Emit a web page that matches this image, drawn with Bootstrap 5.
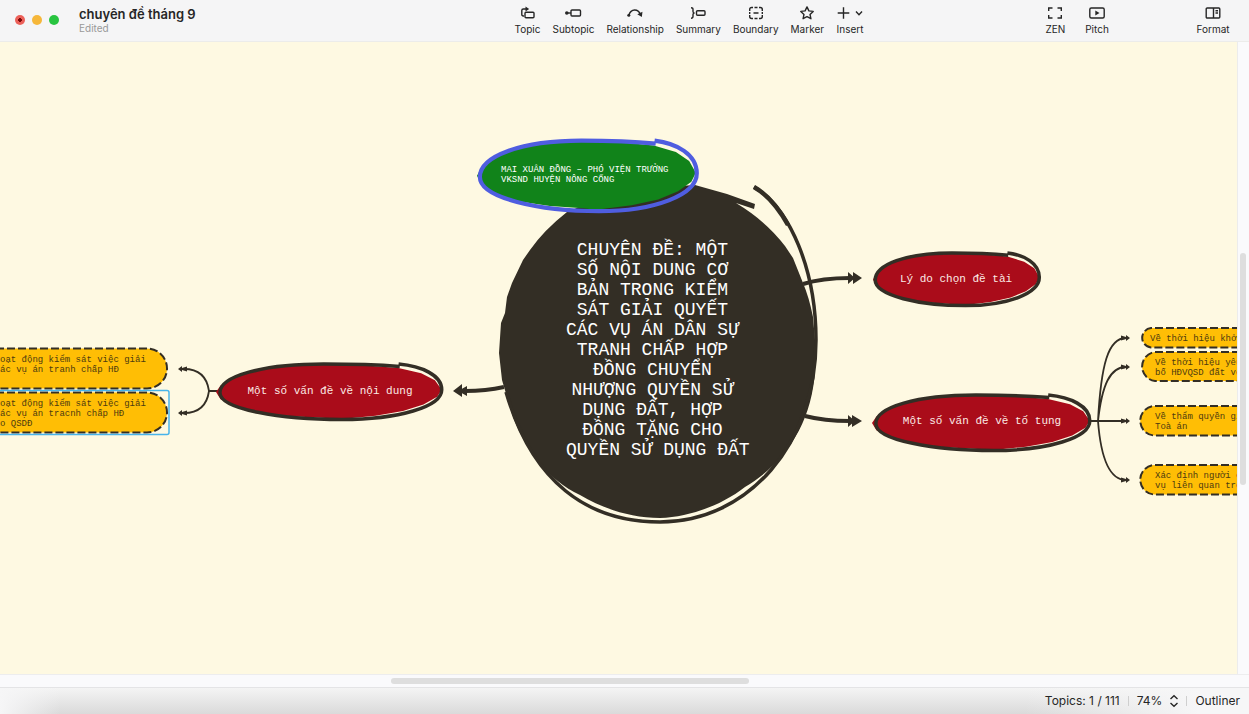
<!DOCTYPE html>
<html lang="vi">
<head>
<meta charset="utf-8">
<meta name="viewport" content="width=device-width, initial-scale=1">
<title>chuyên đề tháng 9</title>
<link rel="stylesheet" href="https://cdn.jsdelivr.net/npm/bootstrap@5.3.0/dist/css/bootstrap.min.css">
<style>
  :root { --ink: #332e25; --paper: #fef9e2; --gold: #ffbe05; --crimson: #aa0c1a; }
  body { font-family: Inter, "Liberation Sans", sans-serif; color: #262626; background: #fafafc; }
  .titlebar { display: grid; grid-template-columns: 41.2% 42.5% 12.1% 1fr; height: 42px; background: #f5f5f6; border-bottom: 1px solid #ececea; }
  .lights { gap: 7px; padding: 15px 0 0 15px; }
  .light { width: 10px; height: 10px; border: 0; border-radius: 50%; padding: 0; display: block; }
  .light-close { background: radial-gradient(circle, #7a0a0a 0 2px, #ec6059 2px); }
  .light-min { background: #f6b73a; }
  .light-zoom { background: #28c440; }
  .doc-title { font-size: 13px; line-height: 16px; font-weight: 600; margin: 6px 0 0; }
  .doc-state { font-size: 10px; line-height: 12px; color: #999; }
  .doc-block { margin-left: 20px; }
  .tool { border: 0; padding: 0; background: none; color: #262626; font-size: 10px; line-height: 12px; display: flex; flex-direction: column; align-items: center; gap: 3px; margin-top: 6px; height: 30px; }
  .tool svg, .stepper svg { fill: none; stroke: currentColor; stroke-width: 1.4; display: block; }
  .tools { gap: 12px; }
  .tools-view { gap: 20px; }
  .canvas { background: var(--paper); }
  .map { left: 0; top: 0; width: 1237px; height: 632px; }
  .ink-fill { fill: var(--ink); }
  .ink-line { fill: none; stroke: var(--ink); }
  .dashed { fill: var(--gold); stroke: var(--ink); stroke-width: 2; stroke-dasharray: 8 3; }
  .topic { position: absolute; margin: 0; white-space: pre; font-family: "Liberation Mono", monospace; }
  .topic-root { left: 566px; top: 198px; font-size: 18px; line-height: 20px; color: #fff; text-align: center; }
  .topic-author { left: 501px; top: 123px; font-size: 9px; line-height: 10px; color: #fff; }
  .topic-main { font-size: 11px; line-height: 14px; color: #fbe9e4; text-align: center; }
  .topic-sub { font-size: 9px; line-height: 10px; color: #4d3b10; }
  .t-content { left: 217px; top: 342px; width: 226px; }
  .t-reason { left: 874px; top: 230px; width: 164px; }
  .t-procedure { left: 874px; top: 372px; width: 216px; }
  .t-l1 { left: 0; top: 313px; }
  .t-l2 { left: 0; top: 357px; }
  .t-r1 { left: 1150px; top: 292px; }
  .t-r2 { left: 1155px; top: 316px; }
  .t-r3 { left: 1155px; top: 370px; }
  .t-r4 { left: 1155px; top: 429px; }
  .gutter-y { width: 12px; border-left: 1px solid #ececec; padding: 211px 0 0 2px; }
  .gutter-y div { width: 6px; height: 232px; border-radius: 3px; background: #dedede; }
  .gutter-x { height: 13px; border-top: 1px solid #ededee; padding-top: 3px; }
  .gutter-x div { height: 6px; width: 28.7%; margin-left: 31.3%; border-radius: 3px; background: #dedede; }
  .statusbar { height: 27px; border-top: 1px solid #e4e4e6; font-size: 12px; line-height: 16px; padding-right: 9px;
    background: linear-gradient(90deg, #f6f6f7 0, #f6f6f700 60px, #f6f6f700 82%, #f6f6f7 96%), linear-gradient(#f4f4f4, #dadada); }
  .divider { width: 1px; height: 10px; background: #cfcfcf; }
  .stepper { border: 0; padding: 0; background: none; color: #262626; }
  .statusbar a { color: #262626; text-decoration: none; }
</style>
</head>
<body class="vh-100 d-flex flex-column overflow-hidden">
<header class="titlebar flex-shrink-0">
  <div class="d-flex align-items-start">
    <div class="lights d-flex">
      <button class="light light-close" aria-label="Close"></button>
      <button class="light light-min" aria-label="Minimize"></button>
      <button class="light light-zoom" aria-label="Zoom"></button>
    </div>
    <div class="doc-block">
      <h1 class="doc-title">chuyên đề tháng 9</h1>
      <div class="doc-state">Edited</div>
    </div>
  </div>
  <nav class="tools d-flex align-items-start">
    <button class="tool"><svg width="18" height="14"><rect x="6" y="6.2" width="9" height="5.6" rx="1"/><path d="M5 10H4.300Q2.800 10 2.800 8.500V4.500Q2.800 3 4.300 3H7.500"/><path d="M6.500 .6 10.200 3 6.500 5.400Z" fill="currentColor" stroke="none"/></svg>Topic</button>
    <button class="tool"><svg width="18" height="14"><rect x="7" y="4" width="9.500" height="6" rx="1"/><path d="M3 7H7"/><circle cx="2.800" cy="7" r="1.800" fill="currentColor" stroke="none"/></svg>Subtopic</button>
    <button class="tool"><svg width="18" height="14"><path d="M3 9C5 2.500 12 2.500 14.500 8.500"/><circle cx="2.800" cy="9.300" r="1.500" fill="currentColor" stroke="none"/><path d="M11.300 8.200 16.500 5.800 15.800 11Z" fill="currentColor" stroke="none"/></svg>Relationship</button>
    <button class="tool"><svg width="18" height="14"><path d="M2 1.800Q4 1.800 4 3.500V5.400Q4 7 5.600 7Q4 7 4 8.600V10.500Q4 12.200 2 12.200"/><rect x="7.500" y="4.700" width="8.500" height="4.600" rx="1"/></svg>Summary</button>
    <button class="tool"><svg width="18" height="14"><path d="M2.700 5V3.500Q2.700 1.500 4.700 1.500H6M12 1.500H13.300Q15.300 1.500 15.300 3.500V5M15.300 9V10.500Q15.300 12.500 13.300 12.500H12M6 12.500H4.700Q2.700 12.500 2.700 10.500V9M7.500 1.500H10.500M7.500 12.500H10.500M2.700 6V8M15.300 6V8M6.500 7H11.500"/></svg>Boundary</button>
    <button class="tool"><svg width="18" height="14"><path stroke-linejoin="round" d="M9 .9 10.900 4.900 15.200 5.400 12 8.400 12.900 12.700 9 10.600 5.100 12.700 6 8.400 2.800 5.400 7.100 4.900Z"/></svg>Marker</button>
    <button class="tool"><svg width="28" height="14"><path d="M7.500 1.200V12.800M1.700 7H13.300M20 5.500 23 8.700 26 5.500"/></svg>Insert</button>
  </nav>
  <nav class="tools-view d-flex align-items-start">
    <button class="tool"><svg width="18" height="14"><path d="M2.700 5V2H6.500M11.500 2H15.300V5M15.300 9V12H11.500M6.500 12H2.700V9"/></svg>ZEN</button>
    <button class="tool"><svg width="18" height="14"><rect x="1.800" y="2" width="14.400" height="10" rx="1.500"/><path d="M7.300 4.500 11.500 7 7.300 9.500Z" fill="currentColor" stroke="none"/></svg>Pitch</button>
  </nav>
  <nav class="d-flex align-items-start">
    <button class="tool"><svg width="18" height="14"><rect x="2.200" y="2" width="13.600" height="10" rx="1"/><path d="M9.500 2V12M11.500 4.700H14M11.500 7H14"/></svg>Format</button>
  </nav>
</header>

<div class="d-flex flex-grow-1 overflow-hidden">
  <main class="canvas position-relative flex-grow-1 overflow-hidden">
    <svg class="map position-absolute" viewBox="0 42 1237 632" aria-hidden="true">
      <defs>
        <!-- hand-drawn ellipse: rough fill and a pen line that overshoots at its end -->
        <symbol id="blob" viewBox="0 0 100 100" preserveAspectRatio="none" overflow="visible">
          <path fill="currentColor" d="M0 51 2 40 7 27 18 14 34 6 48 4 66 6 80 10 90 19 96 31 99 47 97 59 91 72 82 83 70 91 54 97 48 95 33 92 20 86 9 77 2 63Z"/>
        </symbol>
        <symbol id="pen" viewBox="0 0 100 100" preserveAspectRatio="none" overflow="visible">
          <g fill="none" stroke="currentColor">
            <path vector-effect="non-scaling-stroke" d="M80.500 7.500C70 4.500 58 3.500 47 3.500C20 3.500 1.300 24 1.300 52C1.300 80 28 97.500 55 97.500C80 97.500 99 76 99 47C99 22 90 7 80 3.500"/>
          </g>
        </symbol>
      </defs>

      <g class="ink-line" stroke-width="4">
        <path d="M803 284Q822 278 850 278"/>
        <path d="M805 416Q824 421 850 421"/>
        <path d="M504 387Q486 391 465 391"/>
      </g>
      <g class="ink-fill">
        <path d="M848 272 855 278 848 284ZM853 272 862 278 853 284Z"/>
        <path d="M848 415 855 421 848 427ZM852 415 862 421 852 427Z"/>
        <path d="M453 391 462 384V397ZM458 391 467 386V396Z"/>
        <path d="M530 250Q544 230 567 212L620 190 695 185 727 194 755 204 754 209 736 203Q766 221 785 246L793 258 803 283Q809 297 813 317L815 340V370C812 424 784 464 745 487C722 505 690 517 660 518C630 518 602 508 580 495C548 480 525 450 512 414L502 380 499 353 501 323 505 313 507 297 512 283 523 260Z"/>
      </g>
      <g class="ink-line">
        <path stroke-width="3.500" d="M754 187C790 208 816 270 816 340C816 444 748 522 660 522C587 522 532 482 506 392"/>
        <path stroke-width="4.500" d="M754 187C768 195 779 209 788 225"/>
      </g>

      <g class="ink-line" stroke-width="1.800">
        <path d="M218 391H209C207 377 200 369 184 369M209 391C207 405 200 413 184 413"/>
        <path d="M1090 421H1126M1098 421C1101 365 1108 338 1126 338M1098 421C1102 385 1110 367 1126 367M1098 421C1101 460 1110 480 1126 480"/>
      </g>
      <g class="ink-fill">
        <path d="M178 369 182 366V368L187 366.500V371.500L182 370V372ZM178 413 182 410V412L187 410.500V415.500L182 414V416Z"/>
        <path d="M1130 338 1126 335V337L1121 335.500V340.500L1126 339V341ZM1130 367 1126 364V366L1121 364.500V369.500L1126 368V370ZM1130 421 1126 418V420L1121 418.500V423.500L1126 422V424ZM1130 480 1126 477V479L1121 477.500V482.500L1126 481V483Z"/>
      </g>

      <use href="#blob" x="477" y="138" width="221" height="74" color="#11831a"/>
      <use href="#pen" x="477" y="138" width="222" height="75" color="#4f5de0" stroke-width="4.200"/>
      <use href="#blob" x="873" y="251" width="168" height="56" color="#aa0c1a"/>
      <use href="#pen" x="873" y="251" width="168" height="56" color="#332e25" stroke-width="3.500"/>
      <use href="#blob" x="872" y="393" width="220" height="59" color="#aa0c1a"/>
      <use href="#pen" x="873" y="393" width="219" height="59" color="#332e25" stroke-width="3.500"/>
      <use href="#blob" x="216" y="362" width="228" height="59" color="#aa0c1a"/>
      <use href="#pen" x="217" y="362" width="227" height="59" color="#332e25" stroke-width="3.500"/>

      <g class="dashed">
        <path d="M-4 348.500H147A20 20 0 0 1 147 388.500H-4"/>
        <path d="M-4 392.500H147A20 20 0 0 1 147 432.500H-4"/>
        <path d="M1240 328H1151A9.800 9.800 0 0 0 1151 347.500H1240"/>
        <path d="M1240 352H1155A14.600 14.600 0 0 0 1155 381H1240"/>
        <path d="M1240 406H1155A14.600 14.600 0 0 0 1155 435.500H1240"/>
        <path d="M1240 465H1155A14.600 14.600 0 0 0 1155 494.500H1240"/>
      </g>
      <rect x="-6" y="390.500" width="175" height="44" rx="2" fill="none" stroke="#48b4ea" stroke-width="1.500"/>
    </svg>

    <p class="topic topic-root">CHUYÊN ĐỀ: MỘT 
SỐ NỘI DUNG CƠ 
BẢN TRONG KIỂM 
SÁT GIẢI QUYẾT 
CÁC VỤ ÁN DÂN SỰ 
TRANH CHẤP HỢP 
ĐỒNG CHUYỂN 
NHƯỢNG QUYỀN SỬ 
DỤNG ĐẤT, HỢP 
ĐỒNG TẶNG CHO 
QUYỀN SỬ DỤNG ĐẤT</p>
    <p class="topic topic-author">MAI XUÂN ĐỒNG – PHÓ VIỆN TRƯỞNG
VKSND HUYỆN NÔNG CỐNG</p>
    <p class="topic topic-main t-reason">Lý do chọn đề tài</p>
    <p class="topic topic-main t-procedure">Một số vấn đề về tố tụng</p>
    <p class="topic topic-main t-content">Một số vấn đề về nội dung</p>
    <p class="topic topic-sub t-l1">oạt động kiểm sát việc giải
ác vụ án tranh chấp HĐ</p>
    <p class="topic topic-sub t-l2">oạt động kiểm sát việc giải
ác vụ án tracnh chấp HĐ
o QSDĐ</p>
    <p class="topic topic-sub t-r1">Về thời hiệu khởi</p>
    <p class="topic topic-sub t-r2">Về thời hiệu yêu
bố HĐVQSD đất vô</p>
    <p class="topic topic-sub t-r3">Về thẩm quyền gi
Toà án</p>
    <p class="topic topic-sub t-r4">Xác định người c
vụ liên quan tro</p>
  </main>
  <div class="gutter-y flex-shrink-0"><div></div></div>
</div>
<div class="gutter-x flex-shrink-0"><div></div></div>
<footer class="statusbar d-flex flex-shrink-0 align-items-center justify-content-end gap-2">
  <span>Topics: 1 / 111</span>
  <span class="divider"></span>
  <span>74%</span>
  <button class="stepper" aria-label="Change zoom"><svg width="8" height="14" viewBox="2 0 8 14"><path d="M2.500 5 6 1.800 9.500 5M2.500 9 6 12.200 9.500 9"/></svg></button>
  <span class="divider"></span>
  <a href="#outliner">Outliner</a>
</footer>
<script src="https://cdn.jsdelivr.net/npm/bootstrap@5.3.0/dist/js/bootstrap.bundle.min.js"></script>
</body>
</html>
